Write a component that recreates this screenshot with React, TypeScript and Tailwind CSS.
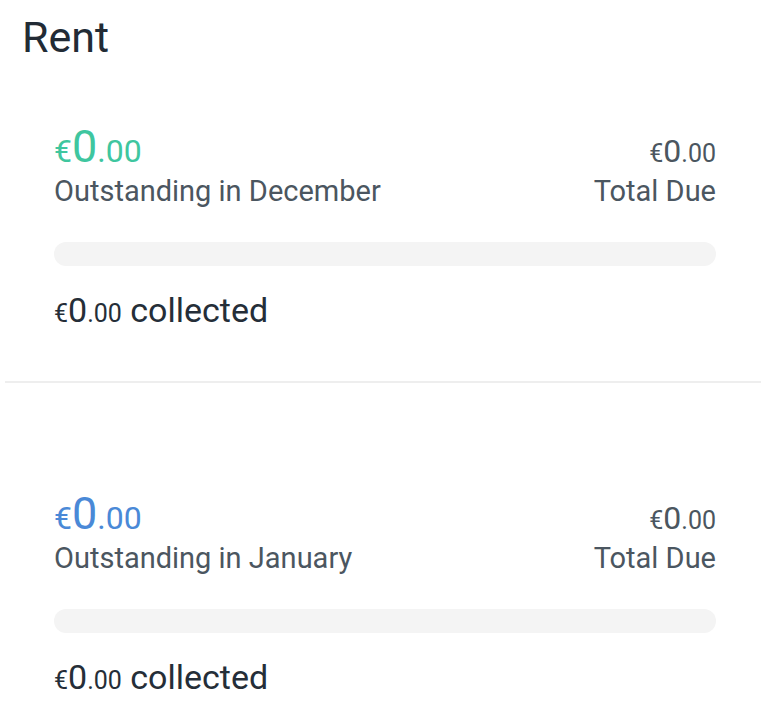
import React from "react";

function Section({ color, month }: { color: string; month: string }) {
  return (
    <section className="pl-[54px] pr-[45px]">
      <div className="flex justify-between items-baseline">
        <div className={`${color} text-[45px] leading-[45px] whitespace-nowrap`}>
          <span className="text-[32px] leading-none">€</span>
          <span>0</span>
          <span className="text-[32px] leading-none">.00</span>
        </div>
        <div className="text-[#4b5660] text-[32px] leading-[32px] whitespace-nowrap">
          <span className="text-[25px] leading-none">€</span>
          <span>0</span>
          <span className="text-[25px] leading-none">.00</span>
        </div>
      </div>
      <div className="mt-[6px] flex justify-between text-[29px] leading-[32px] text-[#4b5660] whitespace-nowrap">
        <div>Outstanding in {month}</div>
        <div>Total Due</div>
      </div>
      <div className="mt-[35px] h-[24px] rounded-full bg-[#f4f4f4]" />
      <div className="mt-[24px] text-[34px] leading-[40px] text-[#252e38] whitespace-nowrap">
        <span className="text-[25px] leading-none">€</span>
        <span>0</span>
        <span className="text-[25px] leading-none">.00</span> collected
      </div>
    </section>
  );
}

export default function App() {
  return (
    <div
      className="w-[761px] h-[724px] bg-white overflow-hidden"
      style={{ fontFamily: "Roboto, 'Noto Sans', sans-serif" }}
    >
      <div className="pl-[22px] pt-[16px] text-[43px] leading-[43px] text-[#222b35]">Rent</div>
      <div className="mt-[65px]">
        <Section color="text-[#3fc69f]" month="December" />
      </div>
      <div className="mt-[51px] ml-[5px] h-[2px] bg-[#eeeeee]" />
      <div className="mt-[108px]">
        <Section color="text-[#4a89d7]" month="January" />
      </div>
    </div>
  );
}
